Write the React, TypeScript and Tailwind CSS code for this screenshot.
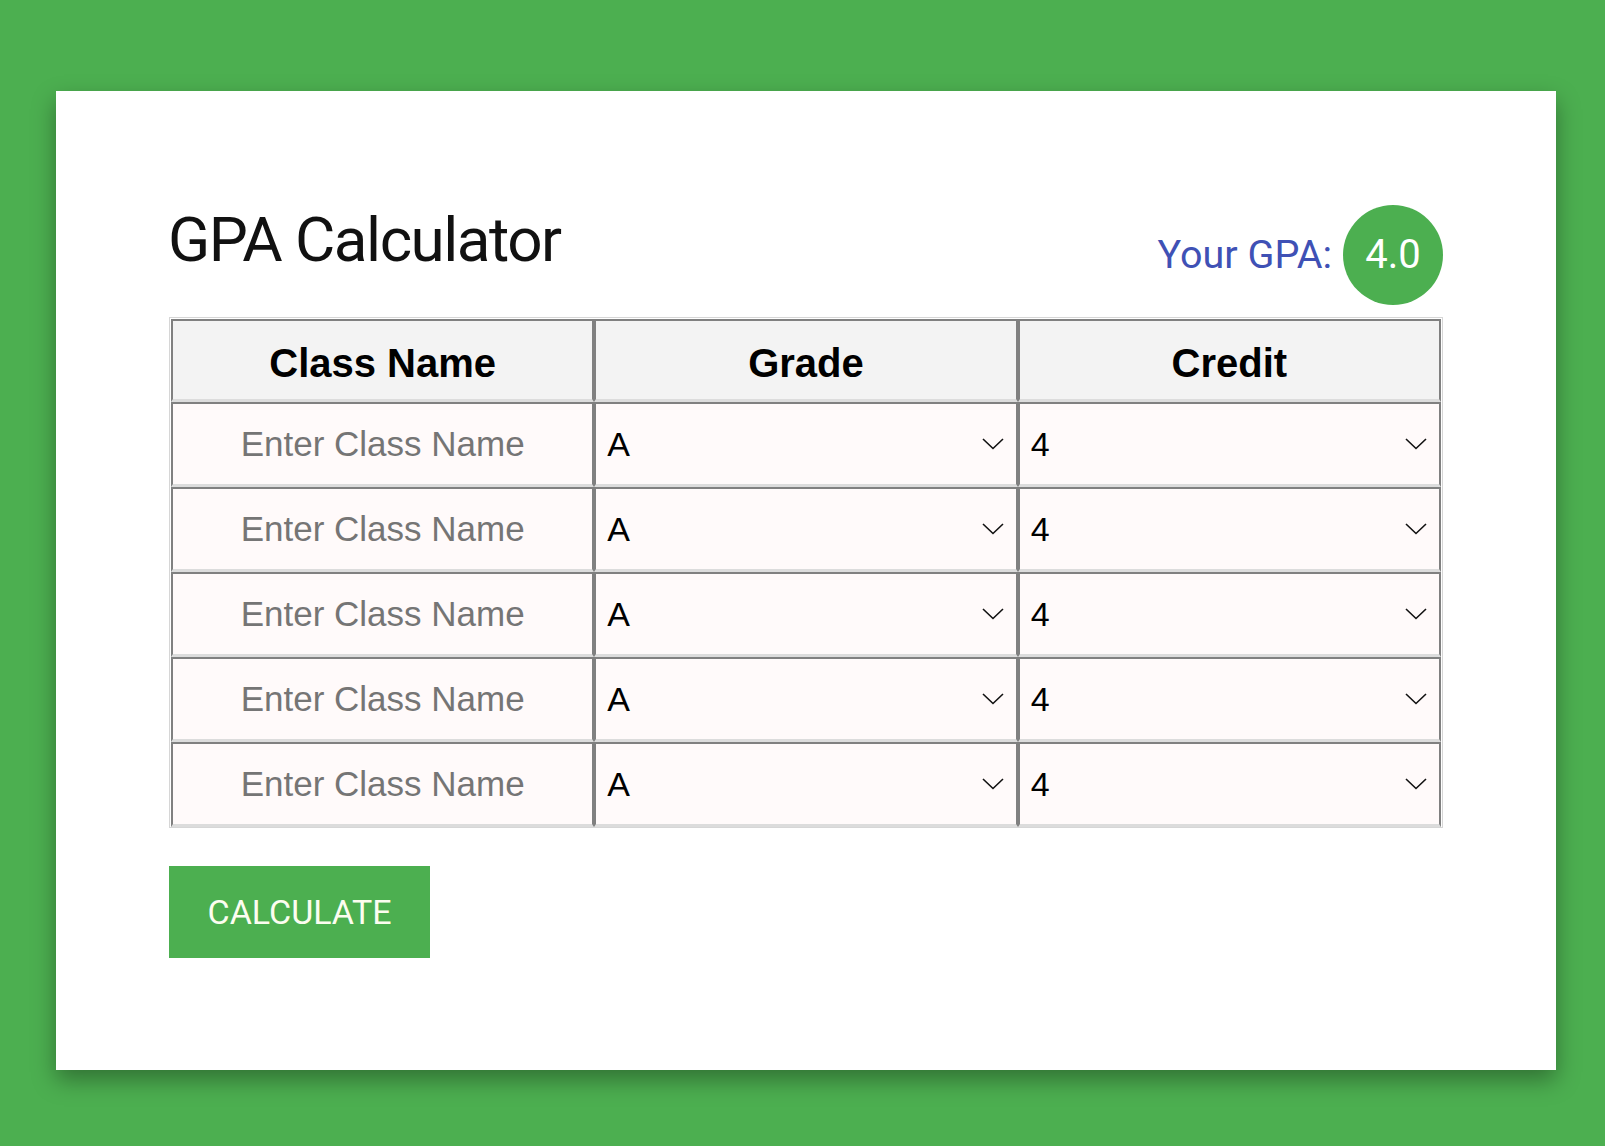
import React from "react";

const rows = [0, 1, 2, 3, 4];

function Chevron() {
  return (
    <svg width="22" height="12" viewBox="0 0 22 12" className="pointer-events-none absolute right-[12px] top-1/2 -translate-y-1/2">
      <polyline points="1,1 11,10.5 21,1" fill="none" stroke="#111" strokeWidth="1.6" />
    </svg>
  );
}

function SelectCell({ options, value }: { options: string[]; value: string }) {
  return (
    <div className="relative h-[85px] flex-1 border-x-2 border-t-2 border-b-[3px] border-x-[#808080] border-t-[#808080] border-b-[#dcdcdc] bg-[#fffafa]">
      <select
        defaultValue={value}
        className="h-full w-full appearance-none bg-transparent pl-[11px] font-['Liberation_Sans',Arial,sans-serif] text-[34px] text-black outline-none"
      >
        {options.map((o) => (
          <option key={o}>{o}</option>
        ))}
      </select>
      <Chevron />
    </div>
  );
}

export default function App() {
  return (
    <div className="min-h-[1146px] bg-[#4caf50] pl-[56px] pt-[91px]">
      <div className="w-[1500px] bg-white px-[113px] pb-[112px] pt-[114px] shadow-[0_10px_22px_rgba(0,0,0,0.35)]">
        <div className="flex h-[100px] items-start justify-between">
          <h1 className="-mt-[2px] -ml-[1px] font-['Roboto',sans-serif] text-[62px] font-normal leading-[73px] tracking-[-1.5px] text-[#111]">
            GPA Calculator
          </h1>
          <div className="flex items-center gap-[11px]">
            <span className="font-['Roboto',sans-serif] text-[39.5px] text-[#3f51b5]">Your GPA:</span>
            <div className="flex h-[100px] w-[100px] items-center justify-center rounded-full bg-[#4caf50] font-['Roboto',sans-serif] text-[40px] text-white">
              4.0
            </div>
          </div>
        </div>

        <div className="mt-[12px] border border-[#d6d6d6] px-[1px] pt-[1px]">
          <div className="flex">
            {["Class Name", "Grade", "Credit"].map((h) => (
              <div
                key={h}
                className="flex h-[83px] flex-1 items-center justify-center border-x-2 border-t-2 border-b-[3px] border-x-[#808080] border-t-[#808080] border-b-[#dcdcdc] bg-[#f3f3f3] pt-[6px] font-['Liberation_Sans',Arial,sans-serif] text-[40px] font-bold text-black"
              >
                {h}
              </div>
            ))}
          </div>
          {rows.map((r) => (
            <div key={r} className="flex">
              <div className="h-[85px] flex-1 border-x-2 border-t-2 border-b-[3px] border-x-[#808080] border-t-[#808080] border-b-[#dcdcdc] bg-[#fffafa]">
                <input
                  placeholder="Enter Class Name"
                  className="h-full w-full bg-transparent text-center font-['Liberation_Sans',Arial,sans-serif] text-[35px] text-black outline-none placeholder:text-[#757575]"
                />
              </div>
              <SelectCell options={["A", "B", "C", "D", "F"]} value="A" />
              <SelectCell options={["4", "3", "2", "1"]} value="4" />
            </div>
          ))}
        </div>

        <button className="mt-[38px] h-[92px] w-[261px] bg-[#4caf50] font-['Roboto',sans-serif] text-[34px] font-normal text-[#fcfdf0]">
          CALCULATE
        </button>
      </div>
    </div>
  );
}
